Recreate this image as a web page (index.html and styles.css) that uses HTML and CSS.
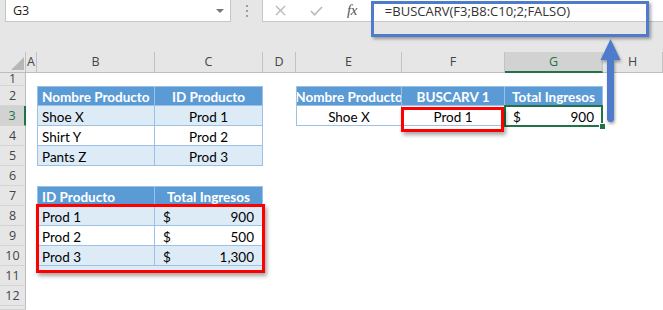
FILE: index.html
```html
<!DOCTYPE html>
<html>
<head>
<meta charset="utf-8">
<link rel="stylesheet" href="styles.css">
</head>
<body>
<div class="app">
  <div class="toolbar">
    <div class="namebox"><span class="ref">G3</span><span class="caret"></span></div>
    <div class="grip"><i></i><i></i><i></i></div>
    <div class="fbar">
      <span class="ico ico-x"><svg width="11" height="11" viewBox="0 0 11 11"><path d="M1 1L10 10M10 1L1 10" stroke="#b9b9b9" stroke-width="1.4" fill="none"/></svg></span>
      <span class="ico ico-ok"><svg width="13" height="10" viewBox="0 0 13 10"><path d="M1 5L4.5 8.8L12 1" stroke="#b9b9b9" stroke-width="1.6" fill="none"/></svg></span>
      <span class="fx">fx</span>
      <span class="ftext">=BUSCARV(F3;B8:C10;2;FALSO)</span>
    </div>
  </div>

  <div class="sheet">
    <div class="row colhdr">
      <div class="corner"><span class="tri"></span></div>
      <div class="ch">A</div><div class="ch">B</div><div class="ch">C</div><div class="ch">D</div>
      <div class="ch">E</div><div class="ch">F</div><div class="ch sel">G</div><div class="ch">H</div>
    </div>
    <div class="row r1"><div class="rh">1</div></div>
    <div class="row">
      <div class="rh">2</div>
      <div class="c cB t tl th">Nombre Producto</div>
      <div class="c t th ctr">ID Producto</div>
      <div class="c cE t tl th ctr">Nombre Producto</div>
      <div class="c t th ctr">BUSCARV 1</div>
      <div class="c t th ctr">Total Ingresos</div>
    </div>
    <div class="row">
      <div class="rh sel">3</div>
      <div class="c cB t tl band">Shoe X</div>
      <div class="c t band ctr">Prod 1</div>
      <div class="c cE t tl ctr">Shoe X</div>
      <div class="c t ctr">Prod 1</div>
      <div class="c t acc"><span>$</span><span>900</span></div>
    </div>
    <div class="row">
      <div class="rh">4</div>
      <div class="c cB t tl">Shirt Y</div>
      <div class="c t ctr">Prod 2</div>
    </div>
    <div class="row">
      <div class="rh">5</div>
      <div class="c cB t tl band">Pants Z</div>
      <div class="c t band ctr">Prod 3</div>
    </div>
    <div class="row"><div class="rh">6</div></div>
    <div class="row">
      <div class="rh">7</div>
      <div class="c cB t tl th">ID Producto</div>
      <div class="c t th ctr">Total Ingresos</div>
    </div>
    <div class="row">
      <div class="rh">8</div>
      <div class="c cB t tl band">Prod 1</div>
      <div class="c t band acc"><span>$</span><span>900</span></div>
    </div>
    <div class="row">
      <div class="rh">9</div>
      <div class="c cB t tl">Prod 2</div>
      <div class="c t acc"><span>$</span><span>500</span></div>
    </div>
    <div class="row">
      <div class="rh">10</div>
      <div class="c cB t tl band">Prod 3</div>
      <div class="c t band acc"><span>$</span><span>1,300</span></div>
    </div>
    <div class="row"><div class="rh">11</div></div>
    <div class="row"><div class="rh">12</div></div>
    <div class="row r13"><div class="rh"></div></div>

    <div class="selbox"><span class="handle"></span></div>
    <div class="redbox red-f3"></div>
    <div class="redbox red-range"></div>
  </div>

  <div class="callout"></div>
  <svg class="arrow" width="30" height="90" viewBox="0 0 30 90">
    <rect x="11" y="20" width="7" height="66" rx="3.5" fill="#4f7bcb"/>
    <polygon points="14.5,3 4.5,24 24.5,24" fill="#4f7bcb"/>
  </svg>
</div>
</body>
</html>
```

FILE: styles.css
```css
html, body {
  margin: 0;
  padding: 0;
  background: #ffffff;
  overflow: hidden;
}

.app {
  position: relative;
  width: 663px;
  height: 310px;
  overflow: hidden;
  background: #ffffff;
}

/* ---------- formula toolbar ---------- */
.toolbar {
  display: flex;
  align-items: flex-start;
  height: 52px;
  background: #e6e6e6;
  font-family: "Open Sans", "Noto Sans", sans-serif;
  font-size: 12px;
  color: #333333;
}

.namebox {
  display: flex;
  align-items: center;
  box-sizing: border-box;
  margin-left: 5px;
  width: 226px;
  height: 22px;
  padding-left: 7px;
  background: #ffffff;
  border: 1px solid #c6c6c6;
  border-top: 0;
}

.namebox .ref {
  font-size: 12.5px;
  color: #222222;
}

.caret {
  margin-left: auto;
  margin-right: 6px;
  width: 0;
  height: 0;
  border-left: 4px solid transparent;
  border-right: 4px solid transparent;
  border-top: 4px solid #777777;
}

.grip {
  display: flex;
  flex-direction: column;
  align-items: center;
  gap: 3px;
  width: 31px;
  padding-top: 5px;
}

.grip i {
  display: block;
  width: 2px;
  height: 2px;
  background: #9e9e9e;
}

.fbar {
  flex: 1;
  display: flex;
  align-items: center;
  box-sizing: border-box;
  height: 22px;
  padding-left: 12px;
  background: #ffffff;
  border-left: 1px solid #c6c6c6;
  border-bottom: 1px solid #c6c6c6;
}

.ico {
  display: flex;
  align-items: center;
}

.ico-ok {
  margin-left: 24px;
}

.fx {
  margin-left: 24px;
  font-family: "Liberation Serif", "DejaVu Serif", serif;
  font-style: italic;
  font-size: 15px;
  color: #555555;
  letter-spacing: -0.5px;
}

.ftext {
  margin-left: 28px;
  font-size: 13px;
  color: #333333;
  white-space: nowrap;
}

.callout {
  position: absolute;
  left: 371px;
  top: 1px;
  width: 278px;
  height: 36px;
  box-sizing: border-box;
  border: 3px solid #4f7bcb;
  box-shadow: 2px 2px 3px rgba(0, 0, 0, 0.35);
}

.arrow {
  position: absolute;
  left: 596px;
  top: 36px;
  filter: drop-shadow(1px 2px 1.5px rgba(0, 0, 0, 0.35));
}

/* ---------- sheet grid ---------- */
.sheet {
  position: relative;
}

.row {
  display: grid;
  grid-template-columns: 26px 11px 118px 108px 33px 106px 103px 98px 60px;
  height: 20px;
}

.r1 {
  height: 14px;
}

.r13 {
  height: 4px;
  overflow: hidden;
}

.colhdr {
  font-family: "Open Sans", "Noto Sans", sans-serif;
  font-size: 12.5px;
  color: #444444;
}

.corner,
.ch {
  box-sizing: border-box;
  background: #e6e6e6;
  border-right: 1px solid #c2c2c2;
  border-bottom: 1px solid #bdbdbd;
  text-align: center;
  line-height: 19px;
}

.corner {
  position: relative;
}

.corner .tri {
  position: absolute;
  right: 1px;
  bottom: 2px;
  width: 0;
  height: 0;
  border-left: 13px solid transparent;
  border-bottom: 13px solid #b7b7b7;
}

.ch.sel {
  background: #d2d2d2;
  color: #217346;
  border-bottom: 2px solid #217346;
}

.rh {
  grid-column: 1;
  box-sizing: border-box;
  background: #e6e6e6;
  border-right: 1px solid #bdbdbd;
  border-bottom: 1px solid #d4d4d4;
  font-family: "Open Sans", "Noto Sans", sans-serif;
  font-size: 12.5px;
  color: #444444;
  text-align: center;
  line-height: 19px;
}

.r1 .rh {
  line-height: 13px;
}

.rh.sel {
  background: #d2d2d2;
  color: #217346;
  border-right: 2px solid #217346;
}

/* ---------- cells ---------- */
.c {
  box-sizing: border-box;
  padding: 2px 3px 0 4px;
  font-family: Lato, "Liberation Sans", sans-serif;
  font-size: 13.5px;
  line-height: 18px;
  color: #000000;
  white-space: nowrap;
  overflow: hidden;
}

.cB {
  grid-column: 3;
}

.cE {
  grid-column: 6;
}

.t {
  border-right: 1px solid #9bc2e6;
  border-bottom: 1px solid #9bc2e6;
}

.tl {
  border-left: 1px solid #9bc2e6;
}

.th {
  background: #5b9bd5;
  color: #ffffff;
  font-weight: bold;
  border-top: 1px solid #9bc2e6;
  padding-top: 1px;
}

.band {
  background: #ddebf7;
}

.ctr {
  display: flex;
  justify-content: center;
  padding-left: 0;
  padding-right: 0;
}

.acc {
  display: flex;
  justify-content: space-between;
  padding-left: 8px;
  padding-right: 8px;
}

/* ---------- overlays ---------- */
.selbox {
  position: absolute;
  left: 504px;
  top: 53px;
  width: 99px;
  height: 22px;
  box-sizing: border-box;
  border: 2px solid #217346;
}

.handle {
  position: absolute;
  right: -4px;
  bottom: -4px;
  width: 5px;
  height: 5px;
  background: #217346;
  outline: 1px solid #ffffff;
}

.redbox {
  position: absolute;
  box-sizing: border-box;
  border: 3px solid #ff0000;
  box-shadow: 2px 3px 4px rgba(0, 0, 0, 0.35);
}

.red-f3 {
  left: 401px;
  top: 55px;
  width: 103px;
  height: 25px;
}

.red-range {
  left: 36px;
  top: 152px;
  width: 229px;
  height: 69px;
  background: linear-gradient(to top, #ddebf7 4px, transparent 4px);
  background-clip: padding-box;
}
```
